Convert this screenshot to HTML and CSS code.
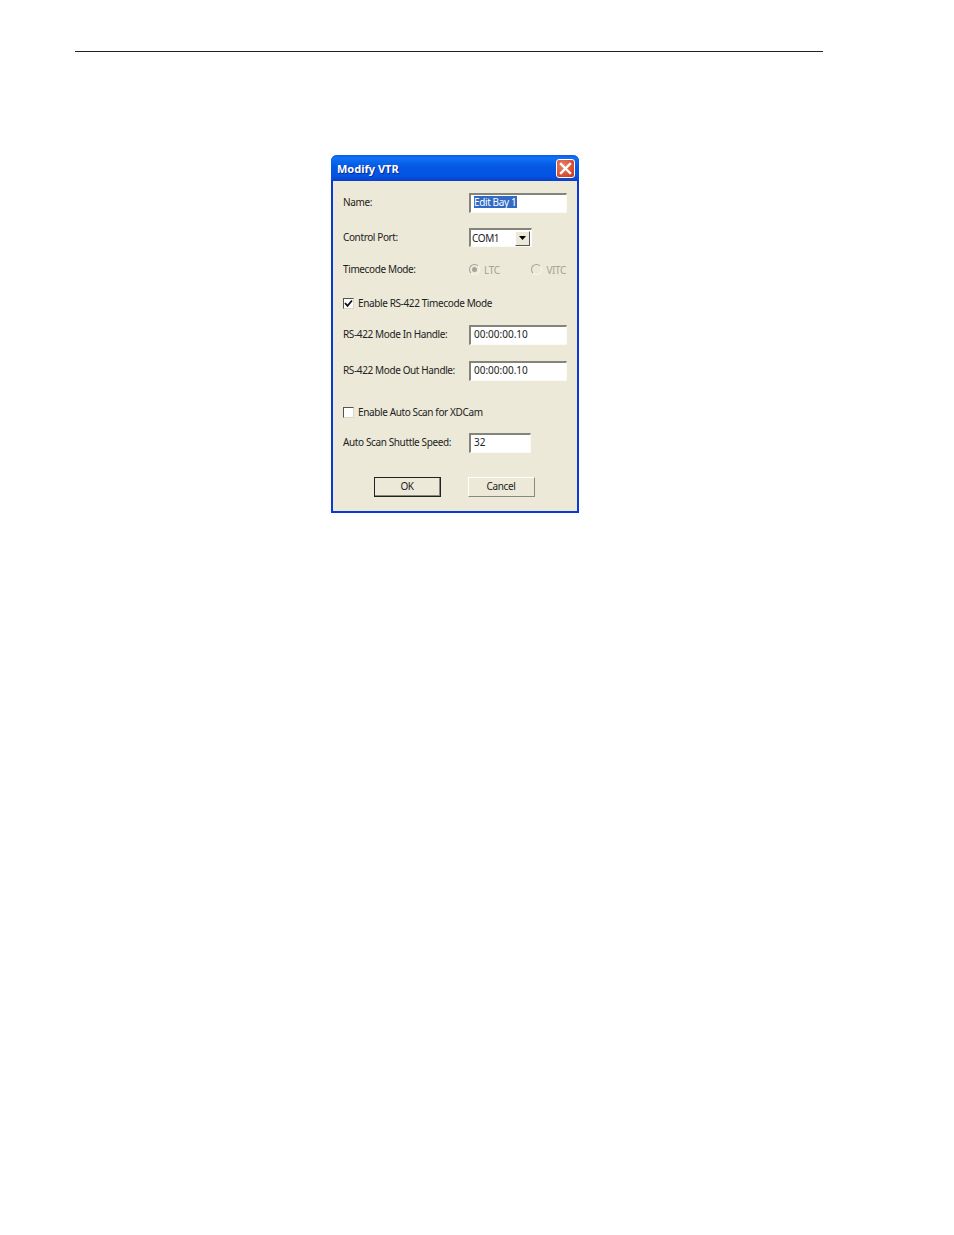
FILE: index.html
```html
<!DOCTYPE html>
<html lang="en">
<head>
  <meta charset="UTF-8">
  <title>Modify VTR</title>
  <link rel="stylesheet" href="styles.css">
</head>
<body>
  <div class="page-rule"></div>

  <div class="dialog">
    <div class="titlebar">
      <span class="title">Modify VTR</span>
      <span class="close">
        <svg width="13" height="13" viewBox="0 0 13 13"><path d="M2 2 L11 11 M11 2 L2 11" stroke="#fff" stroke-width="2.4" stroke-linecap="square"/></svg>
      </span>
    </div>

    <form class="body">
      <div class="row row-name">
        <label>Name:</label>
        <div class="field field-wide"><span class="selected">Edit Bay 1</span></div>
      </div>

      <div class="row row-port">
        <label>Control Port:</label>
        <div class="field field-select">
          <span>COM1</span>
          <span class="arrow-btn"><svg width="7" height="4" viewBox="0 0 7 4"><path d="M0 0 H7 L3.5 4 Z" fill="#000"/></svg></span>
        </div>
      </div>

      <div class="row row-mode">
        <label>Timecode Mode:</label>
        <div class="radios">
          <span class="radio-item"><span class="radio checked"></span>LTC</span>
          <span class="radio-item"><span class="radio"></span>VITC</span>
        </div>
      </div>

      <div class="row row-enable">
        <span class="check">
          <svg width="9" height="9" viewBox="0 0 9 9"><path d="M1 4 L3.5 6.8 L8 1.5" fill="none" stroke="#111" stroke-width="1.8"/></svg>
        </span>
        <span>Enable RS-422 Timecode Mode</span>
      </div>

      <div class="row row-in">
        <label>RS-422 Mode In Handle:</label>
        <div class="field field-wide number">00:00:00.10</div>
      </div>

      <div class="row row-out">
        <label>RS-422 Mode Out Handle:</label>
        <div class="field field-wide number">00:00:00.10</div>
      </div>

      <div class="row row-auto">
        <span class="check"></span>
        <span>Enable Auto Scan for XDCam</span>
      </div>

      <div class="row row-speed">
        <label>Auto Scan Shuttle Speed:</label>
        <div class="field field-short number">32</div>
      </div>

      <div class="buttons">
        <button type="button" class="default">OK</button>
        <button type="button">Cancel</button>
      </div>
    </form>
  </div>
</body>
</html>
```

FILE: styles.css
```css
body {
  margin: 0;
  background: #fff;
  font-family: "Noto Sans", "DejaVu Sans", sans-serif;
  font-size: 10px;
  letter-spacing: -0.38px;
  color: #222;
}
.page-rule {
  width: 748px;
  height: 1px;
  margin: 51px 0 0 75px;
  background: #222;
}
.dialog {
  box-sizing: border-box;
  width: 248px;
  height: 358px;
  margin: 103px 0 0 331px;
  border: 2px solid #0a3ad6;
  border-top: none;
  border-radius: 6px 6px 0 0;
  background: #ece9d8;
}
.titlebar {
  display: flex;
  justify-content: space-between;
  align-items: center;
  height: 26px;
  margin: 0 -2px;
  padding: 0 4px 0 6px;
  border-radius: 6px 6px 0 0;
  background: linear-gradient(#0a5ae6 0%, #0f72f5 12%, #0458e2 45%, #0454e4 80%, #0a3fc8 100%);
}
.title {
  padding-top: 1px;
  color: #fff;
  font-size: 11px;
  font-weight: bold;
  letter-spacing: 0;
  text-shadow: 1px 1px 0 #0a2a90;
}
.close {
  display: flex;
  align-items: center;
  justify-content: center;
  width: 17px;
  height: 17px;
  border: 1px solid #fff;
  border-radius: 3px;
  background: radial-gradient(circle at 35% 35%, #e8866a, #d6472a 70%, #c03a20);
}
.body {
  padding: 12px 10px 0 10px;
}
.row {
  display: flex;
  align-items: center;
}
.row label {
  width: 126px;
  flex: none;
  padding-bottom: 2px;
}
.row-port { margin-top: 15px; }
.row-mode { margin-top: 15px; height: 15px; }
.row-enable { margin-top: 19px; height: 14px; }
.row-in { margin-top: 15px; }
.row-out { margin-top: 16px; }
.row-auto { margin-top: 24px; height: 14px; }
.row-speed { margin-top: 14px; }
.field {
  box-sizing: border-box;
  height: 20px;
  padding: 0 0 3px 3px;
  display: flex;
  align-items: center;
  background: #fff;
  border-top: 2px solid #85847a;
  border-left: 2px solid #85847a;
  border-right: 1px solid #fbfaf5;
  border-bottom: 1px solid #fbfaf5;
}
.field-wide { width: 99px; }
.field-short { width: 62px; }
.number { letter-spacing: 0; }
.field-select {
  width: 63px;
  height: 19px;
  padding: 0 1px 0 1px;
  justify-content: space-between;
}
.selected {
  background: #316ac5;
  color: #fff;
  padding: 0 1px 0 0;
  line-height: 12px;
}
.arrow-btn {
  display: flex;
  align-items: center;
  justify-content: center;
  width: 13px;
  height: 13px;
  background: #ece9d8;
  border: 1px solid;
  border-color: #fff #555 #555 #fff;
}
.radios {
  display: flex;
  justify-content: space-between;
  width: 97px;
  color: #a5a397;
}
.radio-item {
  display: flex;
  align-items: center;
  gap: 4px;
}
.radio {
  position: relative;
  box-sizing: border-box;
  width: 11px;
  height: 11px;
  border: 1px solid #a5a397;
  border-right-color: #f6f5ee;
  border-bottom-color: #f6f5ee;
  border-radius: 50%;
}
.radio.checked::after {
  content: "";
  position: absolute;
  top: 2px;
  left: 2px;
  width: 5px;
  height: 5px;
  border-radius: 50%;
  background: #a5a397;
}
.check {
  box-sizing: border-box;
  display: flex;
  align-items: center;
  justify-content: center;
  width: 11px;
  height: 11px;
  margin-right: 4px;
  background: #fff;
  border: 1px solid #55534a;
  border-right-color: #d8d6c8;
  border-bottom-color: #d8d6c8;
}
.buttons {
  display: flex;
  gap: 27px;
  margin: 24px 0 0 31px;
}
button {
  box-sizing: border-box;
  width: 67px;
  height: 20px;
  padding: 0 1px 2px 0;
  font: inherit;
  letter-spacing: inherit;
  color: #222;
  background: #ece9d8;
  border: 1px solid;
  border-color: #fff #8a887c #8a887c #fff;
}
button.default {
  border: 1px solid #222;
  box-shadow: inset -1px -1px 0 #8a887c;
}
```
